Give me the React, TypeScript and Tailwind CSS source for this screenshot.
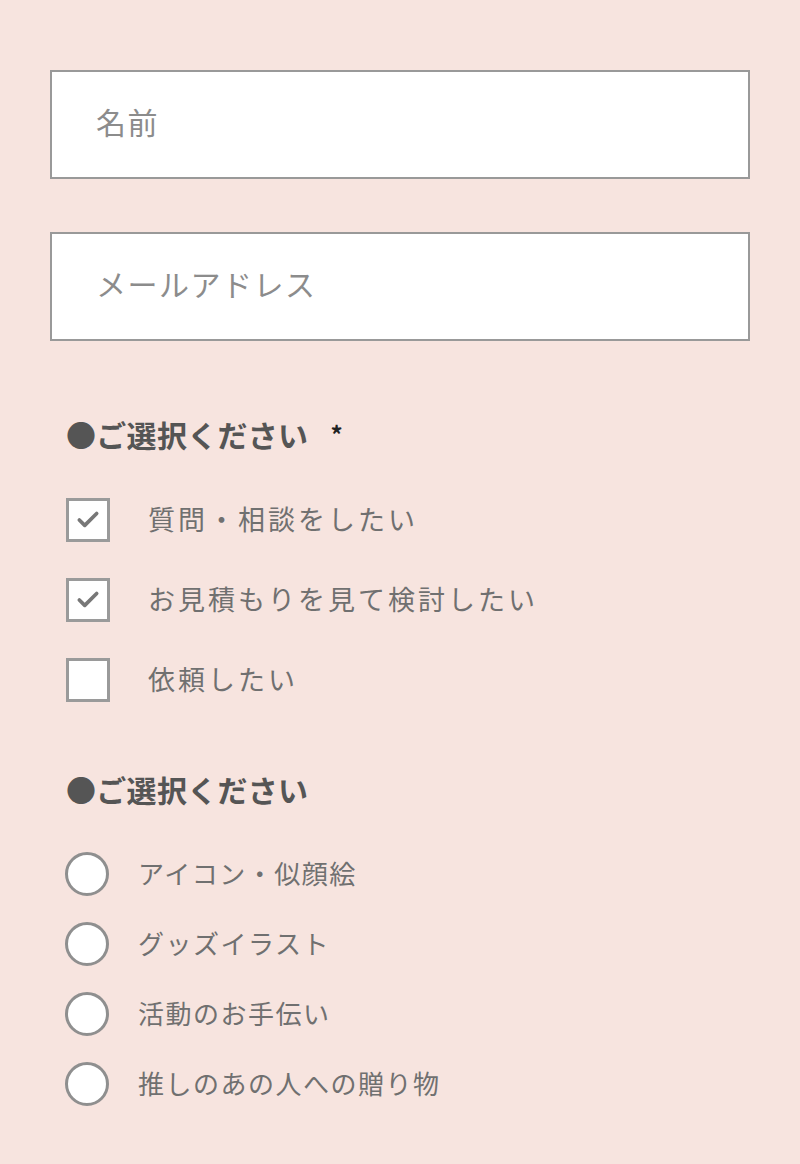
import { Check } from 'lucide-react';

const font = { fontFamily: '"Noto Sans CJK JP", "Noto Sans", sans-serif' };

const checks = [
  { label: '質問・相談をしたい', checked: true },
  { label: 'お見積もりを見て検討したい', checked: true },
  { label: '依頼したい', checked: false },
];

const radios = ['アイコン・似顔絵', 'グッズイラスト', '活動のお手伝い', '推しのあの人への贈り物'];

function TextField({ placeholder }: { placeholder: string }) {
  return (
    <div className="h-[109px] border-2 border-[#999999] bg-white flex items-center pl-[44px] pb-[6px]">
      <span className="text-[30px] text-[#8c8c8c] tracking-[1.5px]">{placeholder}</span>
    </div>
  );
}

export default function App() {
  return (
    <div className="min-h-[1164px] bg-[#f7e4df] px-[50px] pt-[70px]" style={font}>
      <TextField placeholder="名前" />
      <div className="mt-[53px]">
        <TextField placeholder="メールアドレス" />
      </div>

      <h2 className="mt-[73px] ml-[16px] h-[40px] flex items-center text-[30px] font-bold text-[#555555] tracking-[0.3px]">
        ●ご選択ください
        <span className="ml-[22px] text-[24px] text-[#222222]">*</span>
      </h2>

      <div className="mt-[44px] ml-[16px] flex flex-col gap-[36px]">
        {checks.map((c) => (
          <label key={c.label} className="flex items-center h-[44px]">
            <span className="w-[44px] h-[44px] border-[3px] border-[#9a9a9a] bg-white flex items-center justify-center shrink-0">
              {c.checked && <Check className="w-[26px] h-[26px] text-[#777777]" strokeWidth={3.4} />}
            </span>
            <span className="ml-[38px] text-[27px] text-[#707070] tracking-[3px] pb-[2px]">{c.label}</span>
          </label>
        ))}
      </div>

      <h2 className="mt-[67px] ml-[16px] h-[40px] flex items-center text-[30px] font-bold text-[#555555] tracking-[0.3px]">
        ●ご選択ください
      </h2>

      <div className="mt-[43px] ml-[15px] flex flex-col gap-[26px]">
        {radios.map((r) => (
          <label key={r} className="flex items-center h-[44px]">
            <span className="w-[44px] h-[44px] rounded-full border-[3px] border-[#8f8f8f] bg-white shrink-0" />
            <span className="ml-[29px] text-[26px] text-[#707070] tracking-[1.5px] pb-[3px]">{r}</span>
          </label>
        ))}
      </div>
    </div>
  );
}
